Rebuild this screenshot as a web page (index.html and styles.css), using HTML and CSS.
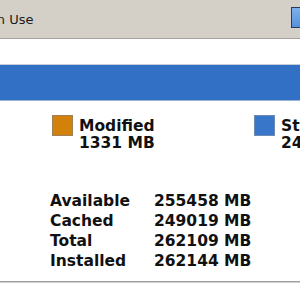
FILE: index.html
```html
<!DOCTYPE html>
<html>
<head>
<meta charset="utf-8">
<link rel="stylesheet" href="styles.css">
</head>
<body>
<div class="header">
  <span class="header-label">In Use</span>
  <span class="header-swatch"></span>
</div>
<div class="strip"></div>
<div class="bar"></div>
<div class="legend">
  <div class="legend-item">
    <span class="swatch swatch-modified"></span>
    <div class="legend-text">
      <div>Modified</div>
      <div>1331 MB</div>
    </div>
  </div>
  <div class="legend-item">
    <span class="swatch swatch-standby"></span>
    <div class="legend-text">
      <div>Standby</div>
      <div>249019 MB</div>
    </div>
  </div>
</div>
<div class="stats">
  <div>Available</div><div>255458 MB</div>
  <div>Cached</div><div>249019 MB</div>
  <div>Total</div><div>262109 MB</div>
  <div>Installed</div><div>262144 MB</div>
</div>
<div class="rule"></div>
</body>
</html>
```
FILE: styles.css
```css
html, body {
  margin: 0;
  padding: 0;
  width: 300px;
  height: 300px;
  overflow: hidden;
  background: #ffffff;
}
body {
  font-family: "DejaVu Sans", Verdana, sans-serif;
  color: #111111;
}
.header {
  height: 38px;
  background: #d4d0c8;
  border-bottom: 1px solid #a5a29b;
  display: flex;
  align-items: flex-start;
  justify-content: space-between;
  white-space: nowrap;
  overflow: hidden;
}
.header-label {
  font-size: 13px;
  line-height: 15px;
  margin-left: -7px;
  margin-top: 12px;
  color: #1a1a1a;
}
.header-swatch {
  width: 8px;
  height: 19px;
  margin-top: 7px;
  border: 1px solid #2a3c5e;
  border-right: none;
  background: linear-gradient(#7fb0ee, #5690dc);
  box-sizing: content-box;
}
.strip {
  height: 25px;
  border-bottom: 1px solid #c4cdd8;
  background: #ffffff;
}
.bar {
  height: 35px;
  background: #3170c4;
  border-bottom: 1px solid #9ab4d8;
}
.legend {
  display: flex;
  padding-top: 14px;
  padding-left: 52px;
  white-space: nowrap;
}
.legend-item {
  display: flex;
  align-items: flex-start;
  gap: 6px;
  width: 202px;
  flex: none;
}
.swatch {
  width: 19px;
  height: 19px;
  flex: none;
  border: 1px solid #8a8a8a;
}
.swatch-modified {
  background: #d2820a;
  border-color: #a08058;
}
.swatch-standby {
  background: #3776c8;
  border-color: #6f8ab0;
}
.legend-text {
  font-weight: bold;
  font-size: 15.5px;
  line-height: 17px;
  padding-top: 3px;
}
.stats {
  display: grid;
  grid-template-columns: 104px auto;
  margin-top: 39px;
  padding-left: 50px;
  font-weight: bold;
  font-size: 15.5px;
  line-height: 20px;
}
.rule {
  margin-top: 10px;
  height: 1px;
  background: #a0a0a0;
  border-bottom: 1px solid #d0d0d0;
}
```
